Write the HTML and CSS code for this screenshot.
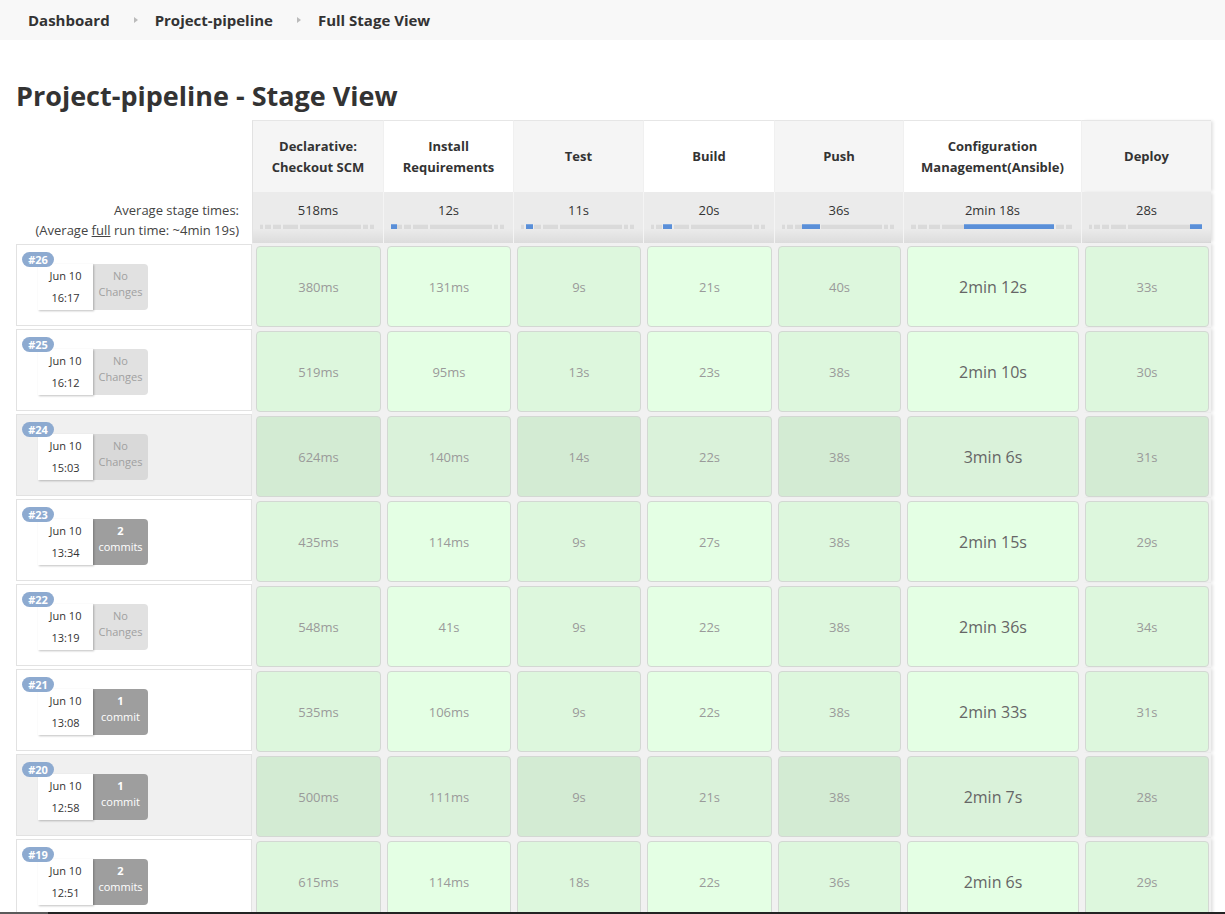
FILE: index.html
```html
<!DOCTYPE html>
<html lang="en">
<head>
<meta charset="utf-8">
<title>Project-pipeline - Stage View</title>
<link rel="stylesheet" href="styles.css">
</head>
<body>
<nav class="breadcrumb">
  <a class="crumb">Dashboard</a><span class="crumb-sep"></span>
  <a class="crumb">Project-pipeline</a><span class="crumb-sep"></span>
  <a class="crumb">Full Stage View</a>
</nav>

<main class="page">
  <h1 class="title">Project-pipeline - Stage View</h1>

  <div class="stage-view">
    <div class="grid-row head-row">
      <div class="left-head"></div>
      <div class="stage-head alt">Declarative: Checkout SCM</div>
      <div class="stage-head">Install Requirements</div>
      <div class="stage-head alt">Test</div>
      <div class="stage-head">Build</div>
      <div class="stage-head alt">Push</div>
      <div class="stage-head">Configuration Management(Ansible)</div>
      <div class="stage-head alt last">Deploy</div>
    </div>

    <div class="grid-row avg-row">
      <div class="avg-label">
        <div>Average stage times:</div>
        <div>(Average <u>full</u> run time: ~4min 19s)</div>
      </div>
      <div class="avg-cell"><div>518ms</div><div class="bar"><span class="tick" style="left:3%"></span><span class="tick" style="left:10%"></span><span class="tick" style="left:18%"></span><span class="tick" style="left:33%"></span><span class="tick" style="left:89%"></span><span class="tick" style="left:95%"></span></div></div>
      <div class="avg-cell"><div>12s</div><div class="bar"><span class="tick" style="left:3%"></span><span class="tick" style="left:10%"></span><span class="tick" style="left:18%"></span><span class="tick" style="left:33%"></span><span class="tick" style="left:89%"></span><span class="tick" style="left:95%"></span><span class="fill" style="left:0%;width:5%"></span></div></div>
      <div class="avg-cell"><div>11s</div><div class="bar"><span class="tick" style="left:3%"></span><span class="tick" style="left:10%"></span><span class="tick" style="left:18%"></span><span class="tick" style="left:33%"></span><span class="tick" style="left:89%"></span><span class="tick" style="left:95%"></span><span class="fill" style="left:4.5%;width:6%"></span></div></div>
      <div class="avg-cell"><div>20s</div><div class="bar"><span class="tick" style="left:3%"></span><span class="tick" style="left:10%"></span><span class="tick" style="left:18%"></span><span class="tick" style="left:33%"></span><span class="tick" style="left:89%"></span><span class="tick" style="left:95%"></span><span class="fill" style="left:10.5%;width:8%"></span></div></div>
      <div class="avg-cell"><div>36s</div><div class="bar"><span class="tick" style="left:3%"></span><span class="tick" style="left:10%"></span><span class="tick" style="left:18%"></span><span class="tick" style="left:33%"></span><span class="tick" style="left:89%"></span><span class="tick" style="left:95%"></span><span class="fill" style="left:17.5%;width:16%"></span></div></div>
      <div class="avg-cell"><div>2min 18s</div><div class="bar"><span class="tick" style="left:3%"></span><span class="tick" style="left:10%"></span><span class="tick" style="left:18%"></span><span class="tick" style="left:33%"></span><span class="tick" style="left:89%"></span><span class="tick" style="left:95%"></span><span class="fill" style="left:33%;width:56%"></span></div></div>
      <div class="avg-cell last"><div>28s</div><div class="bar"><span class="tick" style="left:3%"></span><span class="tick" style="left:10%"></span><span class="tick" style="left:18%"></span><span class="tick" style="left:33%"></span><span class="tick" style="left:89%"></span><span class="tick" style="left:95%"></span><span class="fill" style="left:89%;width:11%"></span></div></div>
    </div>

    <div class="grid-row build-row">
      <div class="build-cell"><span class="badge">#26</span><div class="build-info"><div class="date"><div>Jun 10</div><div>16:17</div></div><div class="changes none"><div>No</div><div>Changes</div></div></div></div>
      <div class="stage-cell alt"><div class="box">380ms</div></div>
      <div class="stage-cell"><div class="box">131ms</div></div>
      <div class="stage-cell alt"><div class="box">9s</div></div>
      <div class="stage-cell"><div class="box">21s</div></div>
      <div class="stage-cell alt"><div class="box">40s</div></div>
      <div class="stage-cell big"><div class="box">2min 12s</div></div>
      <div class="stage-cell alt last"><div class="box">33s</div></div>
    </div>

    <div class="grid-row build-row">
      <div class="build-cell"><span class="badge">#25</span><div class="build-info"><div class="date"><div>Jun 10</div><div>16:12</div></div><div class="changes none"><div>No</div><div>Changes</div></div></div></div>
      <div class="stage-cell alt"><div class="box">519ms</div></div>
      <div class="stage-cell"><div class="box">95ms</div></div>
      <div class="stage-cell alt"><div class="box">13s</div></div>
      <div class="stage-cell"><div class="box">23s</div></div>
      <div class="stage-cell alt"><div class="box">38s</div></div>
      <div class="stage-cell big"><div class="box">2min 10s</div></div>
      <div class="stage-cell alt last"><div class="box">30s</div></div>
    </div>

    <div class="grid-row build-row shaded">
      <div class="build-cell"><span class="badge">#24</span><div class="build-info"><div class="date"><div>Jun 10</div><div>15:03</div></div><div class="changes none"><div>No</div><div>Changes</div></div></div></div>
      <div class="stage-cell alt"><div class="box">624ms</div></div>
      <div class="stage-cell"><div class="box">140ms</div></div>
      <div class="stage-cell alt"><div class="box">14s</div></div>
      <div class="stage-cell"><div class="box">22s</div></div>
      <div class="stage-cell alt"><div class="box">38s</div></div>
      <div class="stage-cell big"><div class="box">3min 6s</div></div>
      <div class="stage-cell alt last"><div class="box">31s</div></div>
    </div>

    <div class="grid-row build-row">
      <div class="build-cell"><span class="badge">#23</span><div class="build-info"><div class="date"><div>Jun 10</div><div>13:34</div></div><div class="changes commits"><div class="num">2</div><div>commits</div></div></div></div>
      <div class="stage-cell alt"><div class="box">435ms</div></div>
      <div class="stage-cell"><div class="box">114ms</div></div>
      <div class="stage-cell alt"><div class="box">9s</div></div>
      <div class="stage-cell"><div class="box">27s</div></div>
      <div class="stage-cell alt"><div class="box">38s</div></div>
      <div class="stage-cell big"><div class="box">2min 15s</div></div>
      <div class="stage-cell alt last"><div class="box">29s</div></div>
    </div>

    <div class="grid-row build-row">
      <div class="build-cell"><span class="badge">#22</span><div class="build-info"><div class="date"><div>Jun 10</div><div>13:19</div></div><div class="changes none"><div>No</div><div>Changes</div></div></div></div>
      <div class="stage-cell alt"><div class="box">548ms</div></div>
      <div class="stage-cell"><div class="box">41s</div></div>
      <div class="stage-cell alt"><div class="box">9s</div></div>
      <div class="stage-cell"><div class="box">22s</div></div>
      <div class="stage-cell alt"><div class="box">38s</div></div>
      <div class="stage-cell big"><div class="box">2min 36s</div></div>
      <div class="stage-cell alt last"><div class="box">34s</div></div>
    </div>

    <div class="grid-row build-row">
      <div class="build-cell"><span class="badge">#21</span><div class="build-info"><div class="date"><div>Jun 10</div><div>13:08</div></div><div class="changes commits"><div class="num">1</div><div>commit</div></div></div></div>
      <div class="stage-cell alt"><div class="box">535ms</div></div>
      <div class="stage-cell"><div class="box">106ms</div></div>
      <div class="stage-cell alt"><div class="box">9s</div></div>
      <div class="stage-cell"><div class="box">22s</div></div>
      <div class="stage-cell alt"><div class="box">38s</div></div>
      <div class="stage-cell big"><div class="box">2min 33s</div></div>
      <div class="stage-cell alt last"><div class="box">31s</div></div>
    </div>

    <div class="grid-row build-row shaded">
      <div class="build-cell"><span class="badge">#20</span><div class="build-info"><div class="date"><div>Jun 10</div><div>12:58</div></div><div class="changes commits"><div class="num">1</div><div>commit</div></div></div></div>
      <div class="stage-cell alt"><div class="box">500ms</div></div>
      <div class="stage-cell"><div class="box">111ms</div></div>
      <div class="stage-cell alt"><div class="box">9s</div></div>
      <div class="stage-cell"><div class="box">21s</div></div>
      <div class="stage-cell alt"><div class="box">38s</div></div>
      <div class="stage-cell big"><div class="box">2min 7s</div></div>
      <div class="stage-cell alt last"><div class="box">28s</div></div>
    </div>

    <div class="grid-row build-row">
      <div class="build-cell"><span class="badge">#19</span><div class="build-info"><div class="date"><div>Jun 10</div><div>12:51</div></div><div class="changes commits"><div class="num">2</div><div>commits</div></div></div></div>
      <div class="stage-cell alt"><div class="box">615ms</div></div>
      <div class="stage-cell"><div class="box">114ms</div></div>
      <div class="stage-cell alt"><div class="box">18s</div></div>
      <div class="stage-cell"><div class="box">22s</div></div>
      <div class="stage-cell alt"><div class="box">36s</div></div>
      <div class="stage-cell big"><div class="box">2min 6s</div></div>
      <div class="stage-cell alt last"><div class="box">29s</div></div>
    </div>
  </div>
</main>
<div class="bottom-edge"></div>
</body>
</html>
```

FILE: styles.css
```css
* { box-sizing: border-box; }

body {
  margin: 0;
  font-family: "Open Sans", "Noto Sans", sans-serif;
  color: #333;
  background: #fff;
}

.breadcrumb {
  height: 40px;
  background: #f8f8f8;
  display: flex;
  align-items: center;
  padding-left: 28px;
  font-size: 15px;
  font-weight: 700;
}
.crumb { color: #333; text-decoration: none; }
.crumb-sep {
  width: 0;
  height: 0;
  border-left: 4px solid #bbb;
  border-top: 3px solid transparent;
  border-bottom: 3px solid transparent;
  margin: 0 17px 0 24px;
}

.page { padding: 0 0 0 16px; }

.title {
  font-size: 27px;
  font-weight: 700;
  margin: 38px 0 6px;
  line-height: 36px;
  color: #333;
}

.stage-view { width: 1195px; }

.grid-row {
  display: grid;
  grid-template-columns: 236px 131px 130px 130px 131px 129px 178px 130px;
}

/* header */
.head-row { height: 72px; }
.stage-head {
  display: flex;
  align-items: center;
  justify-content: center;
  text-align: center;
  font-size: 13px;
  font-weight: 700;
  line-height: 21px;
  padding: 0 10px;
  background: #fff;
  border-top: 1px solid #e6e6e6;
  border-left: 1px solid #f0f0f0;
}
.stage-head.alt { background: #f5f5f5; }
.stage-head:nth-child(2) { border-left: 1px solid #e2e2e2; }
.last { box-shadow: 3px 0 3px -1px rgba(0,0,0,0.12); }

/* average row */
.avg-row { height: 51px; }
.avg-label {
  text-align: right;
  font-size: 13px;
  line-height: 20px;
  padding: 8px 13px 0 0;
  color: #444;
}
.avg-cell {
  background: linear-gradient(to bottom, #ebebeb 72%, #dcdcdc 100%);
  border-left: 1px solid #f4f4f4;
  text-align: center;
  font-size: 13px;
  line-height: 18px;
  padding-top: 9px;
  color: #333;
}
.avg-cell:nth-child(2) { border-left: 1px solid #e2e2e2; }
.bar {
  position: relative;
  height: 5px;
  margin: 5px 9px 0 7px;
  background: #dadada;
  border-top: 1px solid #e6e6e6;
}
.tick {
  position: absolute;
  top: -1px;
  width: 2px;
  height: 5px;
  background: #ececec;
}
.fill {
  position: absolute;
  top: -1px;
  height: 5px;
  background: #5a8fd8;
  border-top: 1px solid #7aa6e0;
}

/* build rows */
.build-row { height: 85px; }
.build-cell {
  position: relative;
  margin: 1px 0 2px 0;
  border: 1px solid #e2e2e2;
  background: #fff;
  padding: 19px 0 0 21px;
}
.shaded .build-cell { background: #f0f0f0; }

.badge {
  position: absolute;
  top: 7px;
  left: 5px;
  z-index: 2;
  width: 32px;
  height: 15px;
  border-radius: 8px;
  background: #8daad0;
  color: #fff;
  font-size: 11px;
  font-weight: 700;
  line-height: 15px;
  text-align: center;
}
.build-info { display: flex; }
.date {
  width: 55px;
  height: 46px;
  background: #fff;
  box-shadow: 1px 1px 2px rgba(0,0,0,0.25);
  font-size: 11px;
  line-height: 22px;
  text-align: center;
  padding-top: 1px;
  color: #333;
  position: relative;
  z-index: 1;
}
.changes {
  width: 55px;
  height: 46px;
  border-radius: 0 4px 4px 0;
  font-size: 11px;
  line-height: 15.5px;
  text-align: center;
  padding-top: 4px;
}
.changes.none { background: #e1e1e1; color: #a0a0a0; }
.shaded .changes.none { background: #d9d9d9; }
.changes.commits { background: #9e9e9e; color: #fff; }
.changes .num { font-weight: 700; }

.stage-cell {
  padding: 3px 2px 1px 4px;
  background: #f1f1f1;
}
.box {
  height: 100%;
  border: 1px solid #d3d8d3;
  border-radius: 4px;
  background: #e4ffe4;
  display: flex;
  align-items: center;
  justify-content: center;
  font-size: 13px;
  color: #9a9a9a;
}
.stage-cell.alt .box { background: #ddf7dd; }
.shaded .stage-cell .box { background: #daf2da; }
.shaded .stage-cell.alt .box { background: #d3ebd3; }
.stage-cell.big .box { font-size: 16px; color: #666; }

.bottom-edge {
  position: fixed;
  left: 0;
  right: 0;
  bottom: 0;
  height: 2px;
  background: linear-gradient(to right, #5a5a5a 48px, #232323 48px);
}
```
